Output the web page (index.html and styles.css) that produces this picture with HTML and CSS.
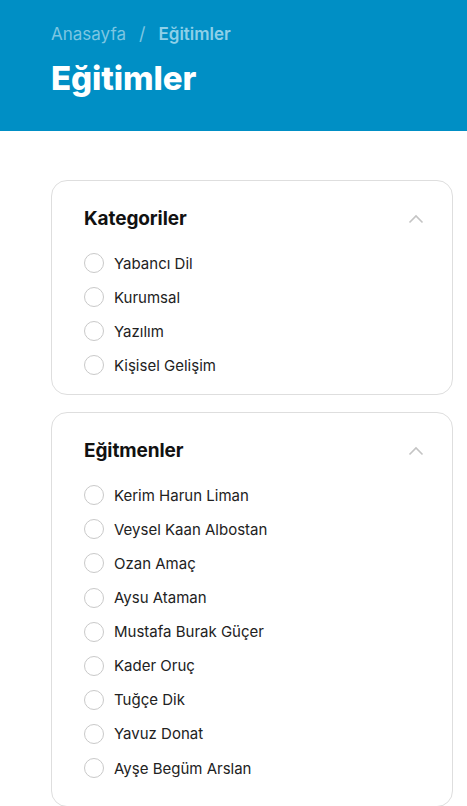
FILE: index.html
```html
<!DOCTYPE html>
<html lang="tr">
<head>
<meta charset="utf-8">
<title>Eğitimler</title>
<link rel="stylesheet" href="styles.css">
</head>
<body>
<header class="hero">
  <nav class="crumbs"><span class="crumb">Anasayfa</span><span class="sep">/</span><span class="crumb current">Eğitimler</span></nav>
  <h1 class="title">Eğitimler</h1>
</header>
<main class="filters">
  <section class="card">
    <div class="card-head">
      <h2>Kategoriler</h2>
      <svg class="chev" width="16" height="10" viewBox="0 0 16 10"><path d="M1.5 8.5 L8 2 L14.5 8.5" fill="none" stroke="#c4c4c4" stroke-width="1.6"/></svg>
    </div>
    <ul class="opts">
      <li><span class="radio"></span>Yabancı Dil</li>
      <li><span class="radio"></span>Kurumsal</li>
      <li><span class="radio"></span>Yazılım</li>
      <li><span class="radio"></span>Kişisel Gelişim</li>
    </ul>
  </section>
  <section class="card card-long">
    <div class="card-head">
      <h2>Eğitmenler</h2>
      <svg class="chev" width="16" height="10" viewBox="0 0 16 10"><path d="M1.5 8.5 L8 2 L14.5 8.5" fill="none" stroke="#c4c4c4" stroke-width="1.6"/></svg>
    </div>
    <ul class="opts">
      <li><span class="radio"></span>Kerim Harun Liman</li>
      <li><span class="radio"></span>Veysel Kaan Albostan</li>
      <li><span class="radio"></span>Ozan Amaç</li>
      <li><span class="radio"></span>Aysu Ataman</li>
      <li><span class="radio"></span>Mustafa Burak Güçer</li>
      <li><span class="radio"></span>Kader Oruç</li>
      <li><span class="radio"></span>Tuğçe Dik</li>
      <li><span class="radio"></span>Yavuz Donat</li>
      <li><span class="radio"></span>Ayşe Begüm Arslan</li>
    </ul>
  </section>
</main>
</body>
</html>
```
FILE: styles.css
```css
* { box-sizing: border-box; }
html, body { margin: 0; padding: 0; background: #fff; }
body { font-family: "Inter", "Noto Sans", sans-serif; color: #1e1e1e; }

.hero {
  background: #008fc5;
  height: 131px;
  padding: 23px 0 0 51px;
}
.crumbs {
  display: flex;
  align-items: center;
  gap: 13px;
  font-size: 17px;
  line-height: 22px;
  color: #7cc6e2;
}
.crumb { font-weight: 400; }
.crumb.current { font-weight: 600; color: #8fd0e8; }
.sep { font-size: 18px; }
.title {
  margin: 13px 0 0;
  font-size: 33px;
  line-height: 40px;
  font-weight: 800;
  color: #fff;
  letter-spacing: -0.1px;
}

.filters {
  padding: 49px 14px 0 51px;
  display: flex;
  flex-direction: column;
  gap: 17px;
}
.card {
  border: 1px solid #dedede;
  border-radius: 16px;
  padding: 25px 28px 19px 32px;
}
.card-long { padding-bottom: 28px; }
.card-head {
  display: flex;
  align-items: center;
  justify-content: space-between;
  height: 24px;
}
.card-head h2 {
  margin: 0;
  font-size: 19px;
  font-weight: 700;
  color: #111;
  letter-spacing: -0.1px;
}
.chev { margin-top: 2px; }
.opts {
  list-style: none;
  margin: 23px 0 0;
  padding: 0;
  display: flex;
  flex-direction: column;
  gap: 14.1px;
}
.opts li {
  display: flex;
  align-items: center;
  height: 20px;
  font-size: 15px;
  font-weight: 400;
  color: #222;
}
.radio {
  width: 20px;
  height: 20px;
  border: 1px solid #c9c9c9;
  border-radius: 50%;
  margin-right: 10px;
  flex: none;
}
```
